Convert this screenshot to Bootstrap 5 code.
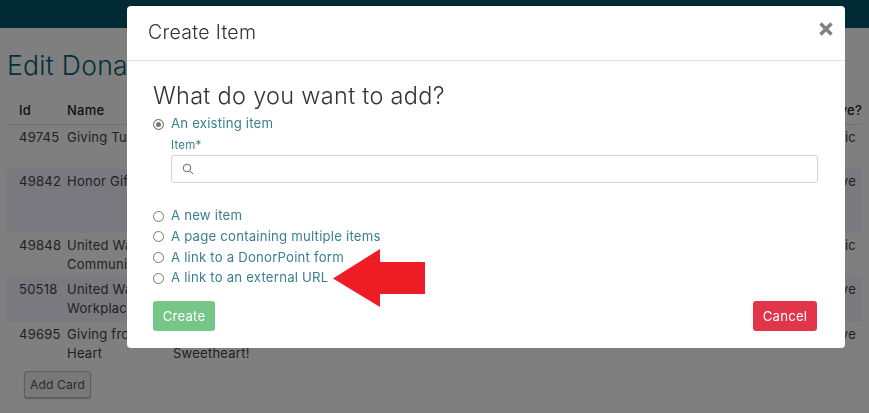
<!doctype html>
<html lang="en"><head><meta charset="utf-8"><title>Create Item</title>
<link rel="stylesheet" href="https://cdn.jsdelivr.net/npm/bootstrap@5.3.0/dist/css/bootstrap.min.css">
<style>
html,body{height:100%;overflow:hidden}
body{font-family:Inter,"Liberation Sans",sans-serif;font-size:13px;color:#212529;background:#fff;font-weight:400}
.topbar{height:28px;background:#00576b}
.page-h{font-size:26.500px;letter-spacing:.3px;color:#045e74;font-weight:300;margin:0;padding:22px 7px 0;line-height:30px;height:68px}
.tbl-wrap{padding:0 7px;width:869px}
.donor-tbl{table-layout:fixed;width:855px;margin:0;font-size:13px;letter-spacing:.25px;line-height:19px;--bs-table-bg:transparent}
.donor-tbl th{font-weight:500;padding:4px 12px 4px;height:28px}
.donor-tbl td{padding:3px 12px 3.5px;border:0;color:#444}
.donor-tbl tbody tr:nth-child(even) td{background:#f2f3ff}
.donor-tbl th:nth-child(2),.donor-tbl td:nth-child(2){padding-left:0;padding-right:4px}
.donor-tbl th:nth-child(3),.donor-tbl td:nth-child(3){padding-left:0}
.donor-tbl th.col-active{text-align:right;padding-right:0}
.donor-tbl td.col-active{text-align:right;padding-right:6px}
.add-btn{margin:5px 0 0 17px;font-size:12px;letter-spacing:.2px;padding:0;width:67px;height:27px;color:#555;background:#f0f0f0;border:1px solid #bbb;border-radius:3px;box-shadow:0 1px 1px rgba(0,0,0,.3)}
.modal-backdrop.show{opacity:.5}
.modal.d-block{overflow:hidden}
.modal-dialog.create-dlg{max-width:718px;width:718px;margin:6px 0 0 127px}
.create-dlg .modal-content{height:342px;border:0;border-radius:4px;display:block}
.create-dlg .modal-header{height:55px;padding:0 21px;border-bottom:1px solid #dee2e6}
.create-dlg .modal-title{font-size:19.500px;letter-spacing:.3px;font-weight:300;color:#333}
.x-btn{position:absolute;right:11px;top:15px;background:none;border:0;padding:0;line-height:0}
.create-dlg .modal-body{padding:22px 27px 0 26px;position:static}
.ask{font-size:23.500px;letter-spacing:.3px;font-weight:300;color:#333;margin:0 0 5px;line-height:26px}
.choice{display:flex;align-items:center;margin:0;height:20.700px;gap:7px;padding:0}
.choice .form-check-input{margin:0;width:11px;height:11px;border:1px solid #767676;flex:none}
.choice .form-check-input:checked{background:#fff;box-shadow:inset 0 0 0 2px #fff;background-color:#767676;border-color:#767676}
.choice label{color:#39808f;font-size:13.200px;letter-spacing:.2px;font-weight:400}
.item-box{padding:2px 0 0 18px;height:71px}
.item-box label{color:#39808f;font-size:11.500px;letter-spacing:.2px;display:block;line-height:16px;margin-bottom:2px}
.search-field{height:28px;border:1px solid #ced4da;border-radius:3px;display:flex;align-items:center;padding-left:10px}
.act{display:flex;justify-content:space-between;margin-top:13px}
.act .btn{font-size:13.200px;letter-spacing:.2px;height:30px;padding:0;border-radius:3px;border:0;line-height:28px}
.btn-create{background:#75c687;color:#fff;width:62px}
.btn-cancel{background:#e13549;color:#fff;width:64px;margin-right:1px}
.red-arrow{position:absolute;left:206px;top:243px}
</style></head><body>
<div class="topbar"></div>
<h1 class="page-h">Edit Donation Page</h1>
<div class="tbl-wrap">
<table class="table donor-tbl">
<colgroup><col style="width:60px"><col style="width:106px"><col><col style="width:80px"></colgroup>
<thead><tr><th>Id</th><th>Name</th><th></th><th class="col-active">Active?</th></tr></thead>
<tbody>
<tr><td>49745</td><td>Giving Tuesday</td><td><br><br></td><td class="col-active">Public</td></tr>
<tr><td>49842</td><td>Honor Gift</td><td><br><br><br></td><td class="col-active">Active</td></tr>
<tr><td>49848</td><td>United Way<br>Community</td><td></td><td class="col-active">Public</td></tr>
<tr><td>50518</td><td>United Way<br>Workplace</td><td></td><td class="col-active">Active</td></tr>
<tr><td>49695</td><td>Giving from the<br>Heart</td><td><br>Sweetheart!</td><td class="col-active">Active</td></tr>
</tbody></table>
<button class="btn add-btn">Add Card</button>
</div>
<div class="modal-backdrop show"></div>
<div class="modal d-block"><div class="modal-dialog create-dlg"><div class="modal-content">
<div class="modal-header"><h5 class="modal-title">Create Item</h5>
<button class="x-btn" aria-label="Close"><svg width="16" height="16" viewBox="0 0 16 16"><path d="M2.500 2.500 13.500 13.500M13.500 2.500 2.500 13.500" stroke="#808080" stroke-width="3.500"/></svg></button></div>
<div class="modal-body">
<h3 class="ask">What do you want to add?</h3>
<div class="choice"><input class="form-check-input" type="radio" name="k" id="r1" checked><label for="r1">An existing item</label></div>
<div class="item-box"><label>Item*</label><div class="search-field"><svg width="12" height="12" viewBox="0 0 12 12" fill="none" stroke="#666"><circle cx="5" cy="5" r="3.8"/><path d="M8 8l3.2 3.2"/></svg></div></div>
<div class="choice"><input class="form-check-input" type="radio" name="k" id="r2"><label for="r2">A new item</label></div>
<div class="choice"><input class="form-check-input" type="radio" name="k" id="r3"><label for="r3">A page containing multiple items</label></div>
<div class="choice"><input class="form-check-input" type="radio" name="k" id="r4"><label for="r4">A link to a DonorPoint form</label></div>
<div class="choice"><input class="form-check-input" type="radio" name="k" id="r5"><label for="r5">A link to an external URL</label></div>
<div class="act"><button class="btn btn-create">Create</button><button class="btn btn-cancel">Cancel</button></div>
<svg class="red-arrow" width="93" height="59" viewBox="0 0 93 59"><path d="M0 29.500L47 0V13H92V45H47V58Z" fill="#ee1c25"/></svg>
</div></div></div></div>
<script src="https://cdn.jsdelivr.net/npm/bootstrap@5.3.0/dist/js/bootstrap.bundle.min.js"></script>
</body></html>
